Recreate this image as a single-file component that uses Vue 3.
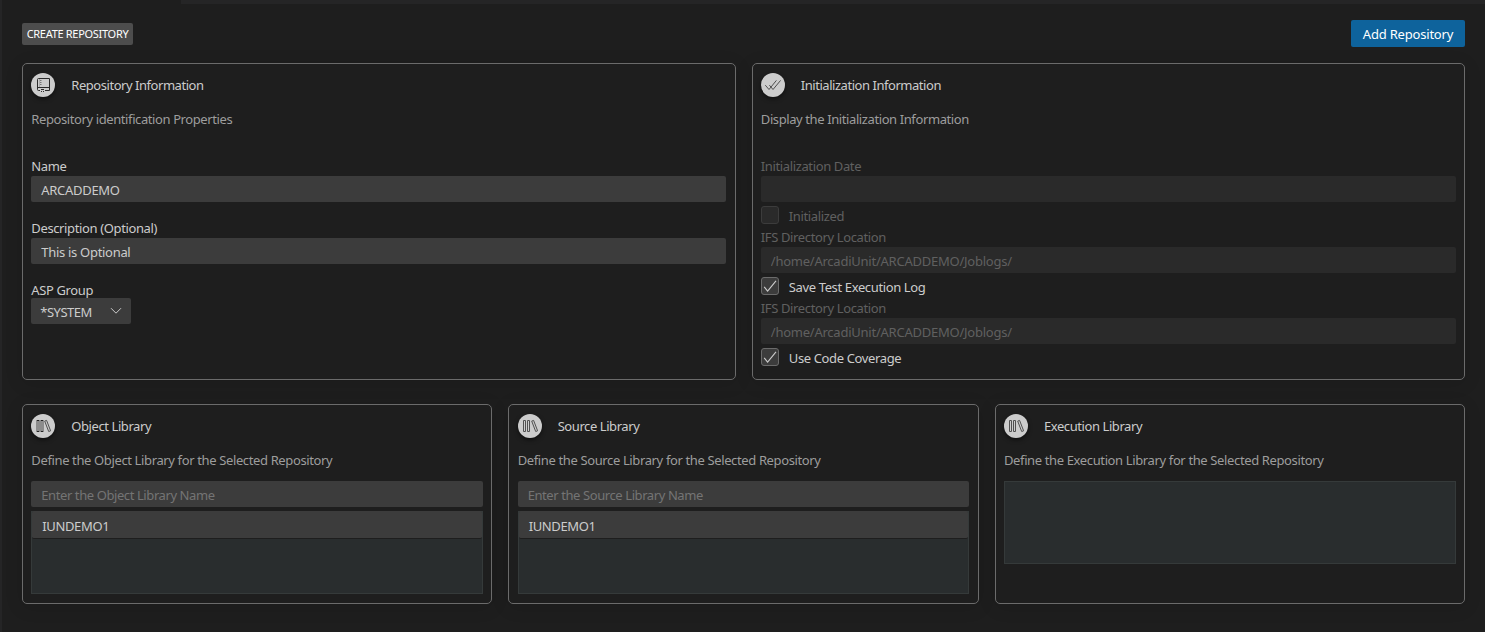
<script setup>
import { ref } from 'vue'

const name = ref('ARCADDEMO')
const description = ref('This is Optional')
const logPath = '/home/ArcadiUnit/ARCADDEMO/Joblogs/'
const options = [
  { field: 'Initialization Date', value: '', label: 'Initialized', checked: false },
  { field: 'IFS Directory Location', value: logPath, label: 'Save Test Execution Log', checked: true },
  { field: 'IFS Directory Location', value: logPath, label: 'Use Code Coverage', checked: true },
]
const libraries = [
  { kind: 'Object', input: true, items: ['IUNDEMO1'] },
  { kind: 'Source', input: true, items: ['IUNDEMO1'] },
  { kind: 'Execution', input: false, items: [] },
]
</script>

<template>
  <div class="page">
    <div class="tabstrip"></div>
    <header class="toolbar">
      <span class="badge">CREATE REPOSITORY</span>
      <button class="primary">Add Repository</button>
    </header>

    <main class="row two">
      <section class="card tall">
        <div class="head">
          <span class="icon">
            <svg width="24" height="24" viewBox="0 0 24 24" fill="none" stroke="#2b2b2b">
              <path d="M9 17.5H7.5a1 1 0 0 1-1-1v-10a1 1 0 0 1 1-1H18.5v12H14M7 14.5h11.5" />
              <path d="M8.5 6v8" stroke="#aaa" />
              <path d="M9 7.5h1.5M9 9.5h1.5M9 11.5h1.5" stroke="#777" />
              <path d="M10 16.5h3M10 18.5h1M12 18.5h1" />
            </svg>
          </span>
          <h2>Repository Information</h2>
        </div>
        <p class="desc">Repository identification Properties</p>
        <div class="form">
          <label class="label">Name</label>
          <input v-model="name" class="input" />
          <label class="label next">Description (Optional)</label>
          <input v-model="description" class="input" />
          <label class="label next">ASP Group</label>
          <div class="select">
            <span>*SYSTEM</span>
            <svg width="12" height="8" viewBox="0 0 12 8" fill="none" stroke="#ccc"><path d="M1 1.2l5 5 5-5" /></svg>
          </div>
        </div>
      </section>

      <section class="card tall">
        <div class="head">
          <span class="icon">
            <svg width="24" height="24" viewBox="0 0 24 24" fill="none" stroke="#505050">
              <path d="M4.3 12.2L8 16.5 15.4 7.4M8.4 12.2L12 16.5 19.6 7.4" />
            </svg>
          </span>
          <h2>Initialization Information</h2>
        </div>
        <p class="desc">Display the Initialization Information</p>
        <div class="form">
          <template v-for="o in options" :key="o.label">
            <label class="label dim">{{ o.field }}</label>
            <input class="input off" :value="o.value" disabled />
            <div class="check" :class="{ disabled: !o.checked }">
              <span class="box">
                <svg v-if="o.checked" width="16" height="16" viewBox="0 0 16 16" fill="none" stroke="#ccc" stroke-width="1.1">
                  <path d="M2.2 8.8l3.4 4.4L14 2.8" />
                </svg>
              </span>
              <span class="caption">{{ o.label }}</span>
            </div>
          </template>
        </div>
      </section>
    </main>

    <div class="row three">
      <section v-for="lib in libraries" :key="lib.kind" class="card short">
        <div class="head">
          <span class="icon">
            <svg width="24" height="24" viewBox="0 0 24 24" fill="none" stroke="#505050">
              <template v-if="lib.kind === 'Object'">
                <path d="M5 6h8v12H5z" fill="#8c8c8c" stroke="none" />
                <path d="M6 6.5h2M10 6.5h2M6 17.5h2M10 17.5h2" stroke="#222" />
              </template>
              <path v-else d="M5.5 6.5h2v11h-2zM9.5 6.5h2v11h-2z" />
              <path d="M13.7 7.1l1.9-.7 4 10.4-1.9.7z" />
            </svg>
          </span>
          <h2>{{ lib.kind }} Library</h2>
        </div>
        <p class="desc wide">Define the {{ lib.kind }} Library for the Selected Repository</p>
        <div class="lib">
          <input v-if="lib.input" class="input" :placeholder="`Enter the ${lib.kind} Library Name`" />
          <ul class="list">
            <li v-for="item in lib.items" :key="item">{{ item }}</li>
          </ul>
        </div>
      </section>
    </div>
  </div>
</template>

<style>
body { background: #1e1e1e; }
</style>

<style scoped>
* { box-sizing: border-box; }
.page {
  height: 632px;
  padding: 0 20px 0 20px;
  border-left: 2px solid #252526;
  background: #1e1e1e;
  color: #ccc;
  font: 13px/18px "Noto Sans", "Open Sans", sans-serif;
  letter-spacing: -0.37px;
  overflow: hidden;
}
.tabstrip { height: 4px; margin: 0 -20px 0 159px; background: #252526; }
.toolbar { display: flex; justify-content: space-between; height: 59px; padding-top: 16px; }
.badge {
  width: 111px; height: 22px; margin-top: 3px;
  border-radius: 2px; background: #4d4d4d; color: #fff;
  font-size: 11px; line-height: 22px; text-align: center; letter-spacing: -0.3px;
}
.primary {
  width: 114px; height: 27px; padding: 0; border: 0; border-radius: 2px;
  background: #0e639c; color: #fff; font: inherit; line-height: 28px; letter-spacing: -0.2px;
}
.row { display: grid; gap: 16px; }
.two { grid-template-columns: repeat(2, minmax(0, 1fr)); }
.three { grid-template-columns: repeat(3, minmax(0, 1fr)); margin-top: 24px; }
.card { padding: 9px 8.3px 0; border: 1px solid #6b6b6b; border-radius: 5px; box-shadow: 0 3px 18px rgba(0, 0, 0, .12); }
.tall { height: 317px; }
.short { height: 200px; }
.head { display: flex; align-items: center; gap: 16px; }
.icon {
  width: 24px; height: 24px; border-radius: 50%;
  background: #ccc; box-shadow: 0 2px 4px rgba(0, 0, 0, .5);
}
.icon svg { display: block; }
h2 { margin: 0; font: inherit; letter-spacing: -0.46px; }
.short h2 { letter-spacing: -0.42px; }
.desc { height: 18px; margin: 13px 0 0; color: #9d9d9d; white-space: nowrap; letter-spacing: -0.4px; }
.wide { letter-spacing: -0.37px; }
.form { display: flex; flex-direction: column; padding-top: 29px; }
.label { height: 18px; margin-bottom: 1px; }
.next { margin-top: 17px; }
.dim { color: #606060; }
.input {
  display: block; width: 100%; height: 26px; padding: 2px 10px 0; border: 0; border-radius: 2px;
  background: #3c3c3c; color: #ccc; font: inherit; letter-spacing: -0.3px; outline: 0;
}
.input::placeholder { color: #747474; opacity: 1; letter-spacing: -0.41px; }
.input.off { background: #2a2a2a; color: #606060; letter-spacing: -0.24px; }
.select {
  display: flex; align-items: center; justify-content: space-between;
  width: 100px; height: 26px; margin-top: -2px; padding: 2px 9px 0;
  border-radius: 2px; background: #3c3c3c; letter-spacing: -0.5px;
}
.select svg { margin-top: -2px; }
.check { display: flex; gap: 10px; height: 18px; margin: 4px 0; }
.box { width: 18px; height: 18px; border: 1px solid #6b6b6b; border-radius: 3px; background: #3c3c3c; }
.box svg { display: block; }
.caption { padding-top: 1px; }
.disabled .box { border-color: #3c3c3c; background: #2a2a2a; }
.disabled .caption { color: #606060; }
.lib { display: flex; flex-direction: column; gap: 4px; padding-top: 12px; }
.list { height: 83px; margin: 0; padding: 0; border: 1px solid #353a3a; background: #292d2e; list-style: none; }
.list li {
  height: 28px; margin: -1px 0 0; padding: 2px 10px 0; border-bottom: 1px solid #1e1e1e;
  border-radius: 2px; background: #3c3c3c; line-height: 26px;
}
</style>
